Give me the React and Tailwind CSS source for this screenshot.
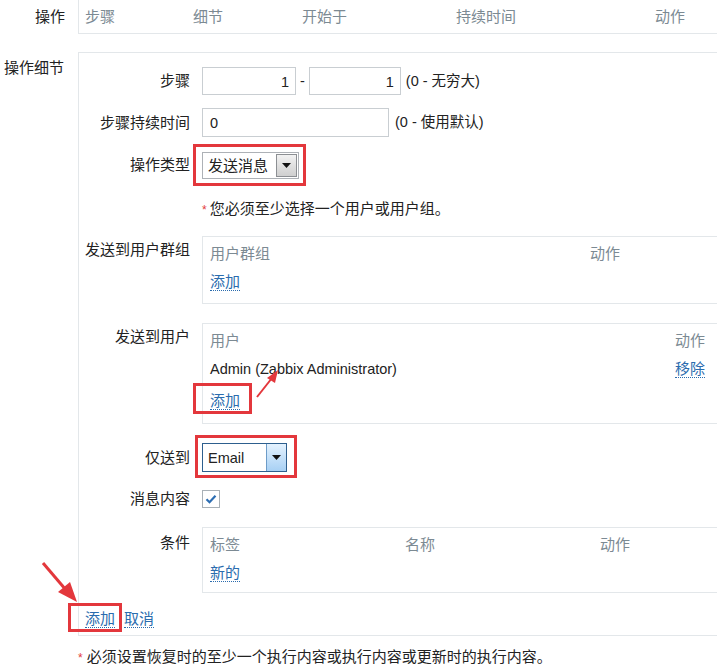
import React from 'react';

const Link = ({ children }) => (
  <span className="text-[#2b6cae] border-b border-dotted border-[#2b6cae] leading-[17px] inline-block">{children}</span>
);

const Row = ({ label, mt, h, labelPt = 0, children }) => (
  <div className={`flex ${mt} ${h}`}>
    <div className={`w-[111px] text-right shrink-0 whitespace-nowrap ${labelPt}`}>{label}</div>
    <div className="ml-[12px] flex-1 min-w-0">{children}</div>
  </div>
);

const TableHead = ({ children }) => <span className="text-[#7c8a93]">{children}</span>;

const App = () => {
  return (
    <div className="relative w-[717px] h-[669px] overflow-hidden bg-white text-[15px] leading-[18px] text-[#222] font-['Liberation_Sans','Noto_Sans_CJK_SC',sans-serif]">
      {/* operations list */}
      <div className="flex h-[34px]">
        <div className="w-[78px] shrink-0 text-right pr-[13px] pt-[8px]">操作</div>
        <div className="w-[700px] shrink-0 border border-t-0 border-[#e3e7ea] grid grid-cols-[108px_109px_154px_199px_1fr] pl-[6px] pt-[8px]">
          <TableHead>步骤</TableHead>
          <TableHead>细节</TableHead>
          <TableHead>开始于</TableHead>
          <TableHead>持续时间</TableHead>
          <TableHead>动作</TableHead>
        </div>
      </div>

      {/* operation details */}
      <div className="flex mt-[18px]">
        <div className="w-[78px] shrink-0 text-right pr-[14px] pt-[7px]">操作细节</div>
        <div className="w-[700px] shrink-0 border border-r-0 border-[#e3e7ea] pt-[14px] pb-[7px]">
          <Row label="步骤" h="h-[28px]" labelPt="pt-[5px]">
            <div className="flex items-center h-full text-[14.5px]">
              <div className="w-[94px] h-[28px] border border-[#c9ced2] text-right pr-[6px] pt-[5px]">1</div>
              <span className="mx-[4px]">-</span>
              <div className="w-[92px] h-[28px] border border-[#c9ced2] text-right pr-[6px] pt-[5px]">1</div>
              <span className="ml-[5px]">(0 - 无穷大)</span>
            </div>
          </Row>
          <Row label="步骤持续时间" mt="mt-[13px]" h="h-[28px]" labelPt="pt-[6px]">
            <div className="flex items-center h-full text-[14.5px]">
              <div className="w-[187px] h-[29px] border border-[#c9ced2] pl-[7px] pt-[5px]">0</div>
              <span className="ml-[6px]">(0 - 使用默认)</span>
            </div>
          </Row>
          <Row label="操作类型" mt="mt-[16px]" h="h-[28px]" labelPt="pt-[4px]">
            <div className="flex w-[97px] h-[27px] border border-[#adb1b6] bg-white items-center">
              <span className="flex-1 pl-[5px]">发送消息</span>
              <div className="w-[21px] h-[23px] mr-[1px] border border-[#8c8f93] bg-gradient-to-b from-[#f2f2f2] to-[#cfcfcf] flex items-center justify-center">
                <svg width="9" height="5" viewBox="0 0 9 5"><path d="M0 0h9L4.5 5z" fill="#111" /></svg>
              </div>
            </div>
          </Row>
          <Row mt="mt-[20px]" h="h-[18px]">
            <div className="whitespace-nowrap">
              <span className="text-[#e33b3b] text-[12px] mr-[3px]">*</span>
              您必须至少选择一个用户或用户组。
            </div>
          </Row>
          <Row label="发送到用户群组" mt="mt-[18px]" h="h-[68px]" labelPt="pt-[5px]">
            <div className="w-[560px] h-[68px] border border-[#e3e7ea] pl-[7px] pt-[8px]">
              <div className="grid grid-cols-[380px_1fr]">
                <TableHead>用户群组</TableHead>
                <TableHead>动作</TableHead>
              </div>
              <div className="mt-[10px]"><Link>添加</Link></div>
            </div>
          </Row>
          <Row label="发送到用户" mt="mt-[19px]" h="h-[101px]" labelPt="pt-[5px]">
            <div className="w-[560px] h-[101px] border border-[#e3e7ea] pl-[7px] pt-[8px]">
              <div className="grid grid-cols-[465px_1fr]">
                <TableHead>用户</TableHead>
                <TableHead>动作</TableHead>
              </div>
              <div className="grid grid-cols-[465px_1fr] mt-[10px]">
                <span className="text-[14.5px]">Admin (Zabbix Administrator)</span>
                <div><Link>移除</Link></div>
              </div>
              <div className="mt-[14px]"><Link>添加</Link></div>
            </div>
          </Row>
          <Row label="仅送到" mt="mt-[19px]" h="h-[28px]" labelPt="pt-[6px]">
            <div className="flex w-[85px] h-[29px] border border-[#2d5f8e] bg-white items-center">
              <span className="flex-1 pl-[5px] text-[14.5px]">Email</span>
              <div className="w-[20px] h-[27px] border-l border-[#6d9cc8] bg-gradient-to-b from-[#e4f2fe] to-[#a7d0f4] flex items-center justify-center">
                <svg width="9" height="5" viewBox="0 0 9 5"><path d="M0 0h9L4.5 5z" fill="#111" /></svg>
              </div>
            </div>
          </Row>
          <Row label="消息内容" mt="mt-[19px]" h="h-[18px]">
            <div className="w-[18px] h-[18px] border border-[#a9b1b7] bg-white flex items-center justify-center">
              <svg width="12" height="10" viewBox="0 0 12 10">
                <path d="M1.5 5.2l3 3 6-6.5" fill="none" stroke="#2d6eb3" strokeWidth="2.2" />
              </svg>
            </div>
          </Row>
          <Row label="条件" mt="mt-[19px]" h="h-[66px]" labelPt="pt-[7px]">
            <div className="w-[560px] h-[66px] border border-[#e3e7ea] pl-[7px] pt-[8px]">
              <div className="grid grid-cols-[195px_195px_1fr]">
                <TableHead>标签</TableHead>
                <TableHead>名称</TableHead>
                <TableHead>动作</TableHead>
              </div>
              <div className="mt-[10px]"><Link>新的</Link></div>
            </div>
          </Row>
          <div className="flex mt-[17px] h-[18px] pl-[6px]">
            <Link>添加</Link>
            <span className="ml-[9px]"><Link>取消</Link></span>
          </div>
        </div>
      </div>

      <div className="mt-[12px] pl-[78px] whitespace-nowrap">
        <span className="text-[#e33b3b] text-[12px] mr-[4px]">*</span>
        必须设置恢复时的至少一个执行内容或执行内容或更新时的执行内容。
      </div>

      {/* annotations */}
      <div className="absolute left-[193px] top-[144px] w-[113px] h-[42px] border-[3px] border-[#e3373c]" />
      <div className="absolute left-[195px] top-[435px] w-[102px] h-[43px] border-[3px] border-[#e3373c]" />
      <div className="absolute left-[193px] top-[383px] w-[59px] h-[31px] border-[3px] border-[#e3373c]" />
      <div className="absolute left-[68px] top-[603px] w-[54px] h-[29px] border-[3px] border-[#e3373c]" />
      <svg className="absolute left-0 top-0" width="717" height="669" viewBox="0 0 717 669">
        <line x1="257" y1="397" x2="272" y2="378" stroke="#e3373c" strokeWidth="2" />
        <path d="M278 370 L267 378 L275 383 Z" fill="#e3373c" />
        <line x1="43" y1="563" x2="66" y2="590" stroke="#e3373c" strokeWidth="3" />
        <path d="M77 602 L58 592 L70 582 Z" fill="#e3373c" />
      </svg>
    </div>
  );
};

export default App;
